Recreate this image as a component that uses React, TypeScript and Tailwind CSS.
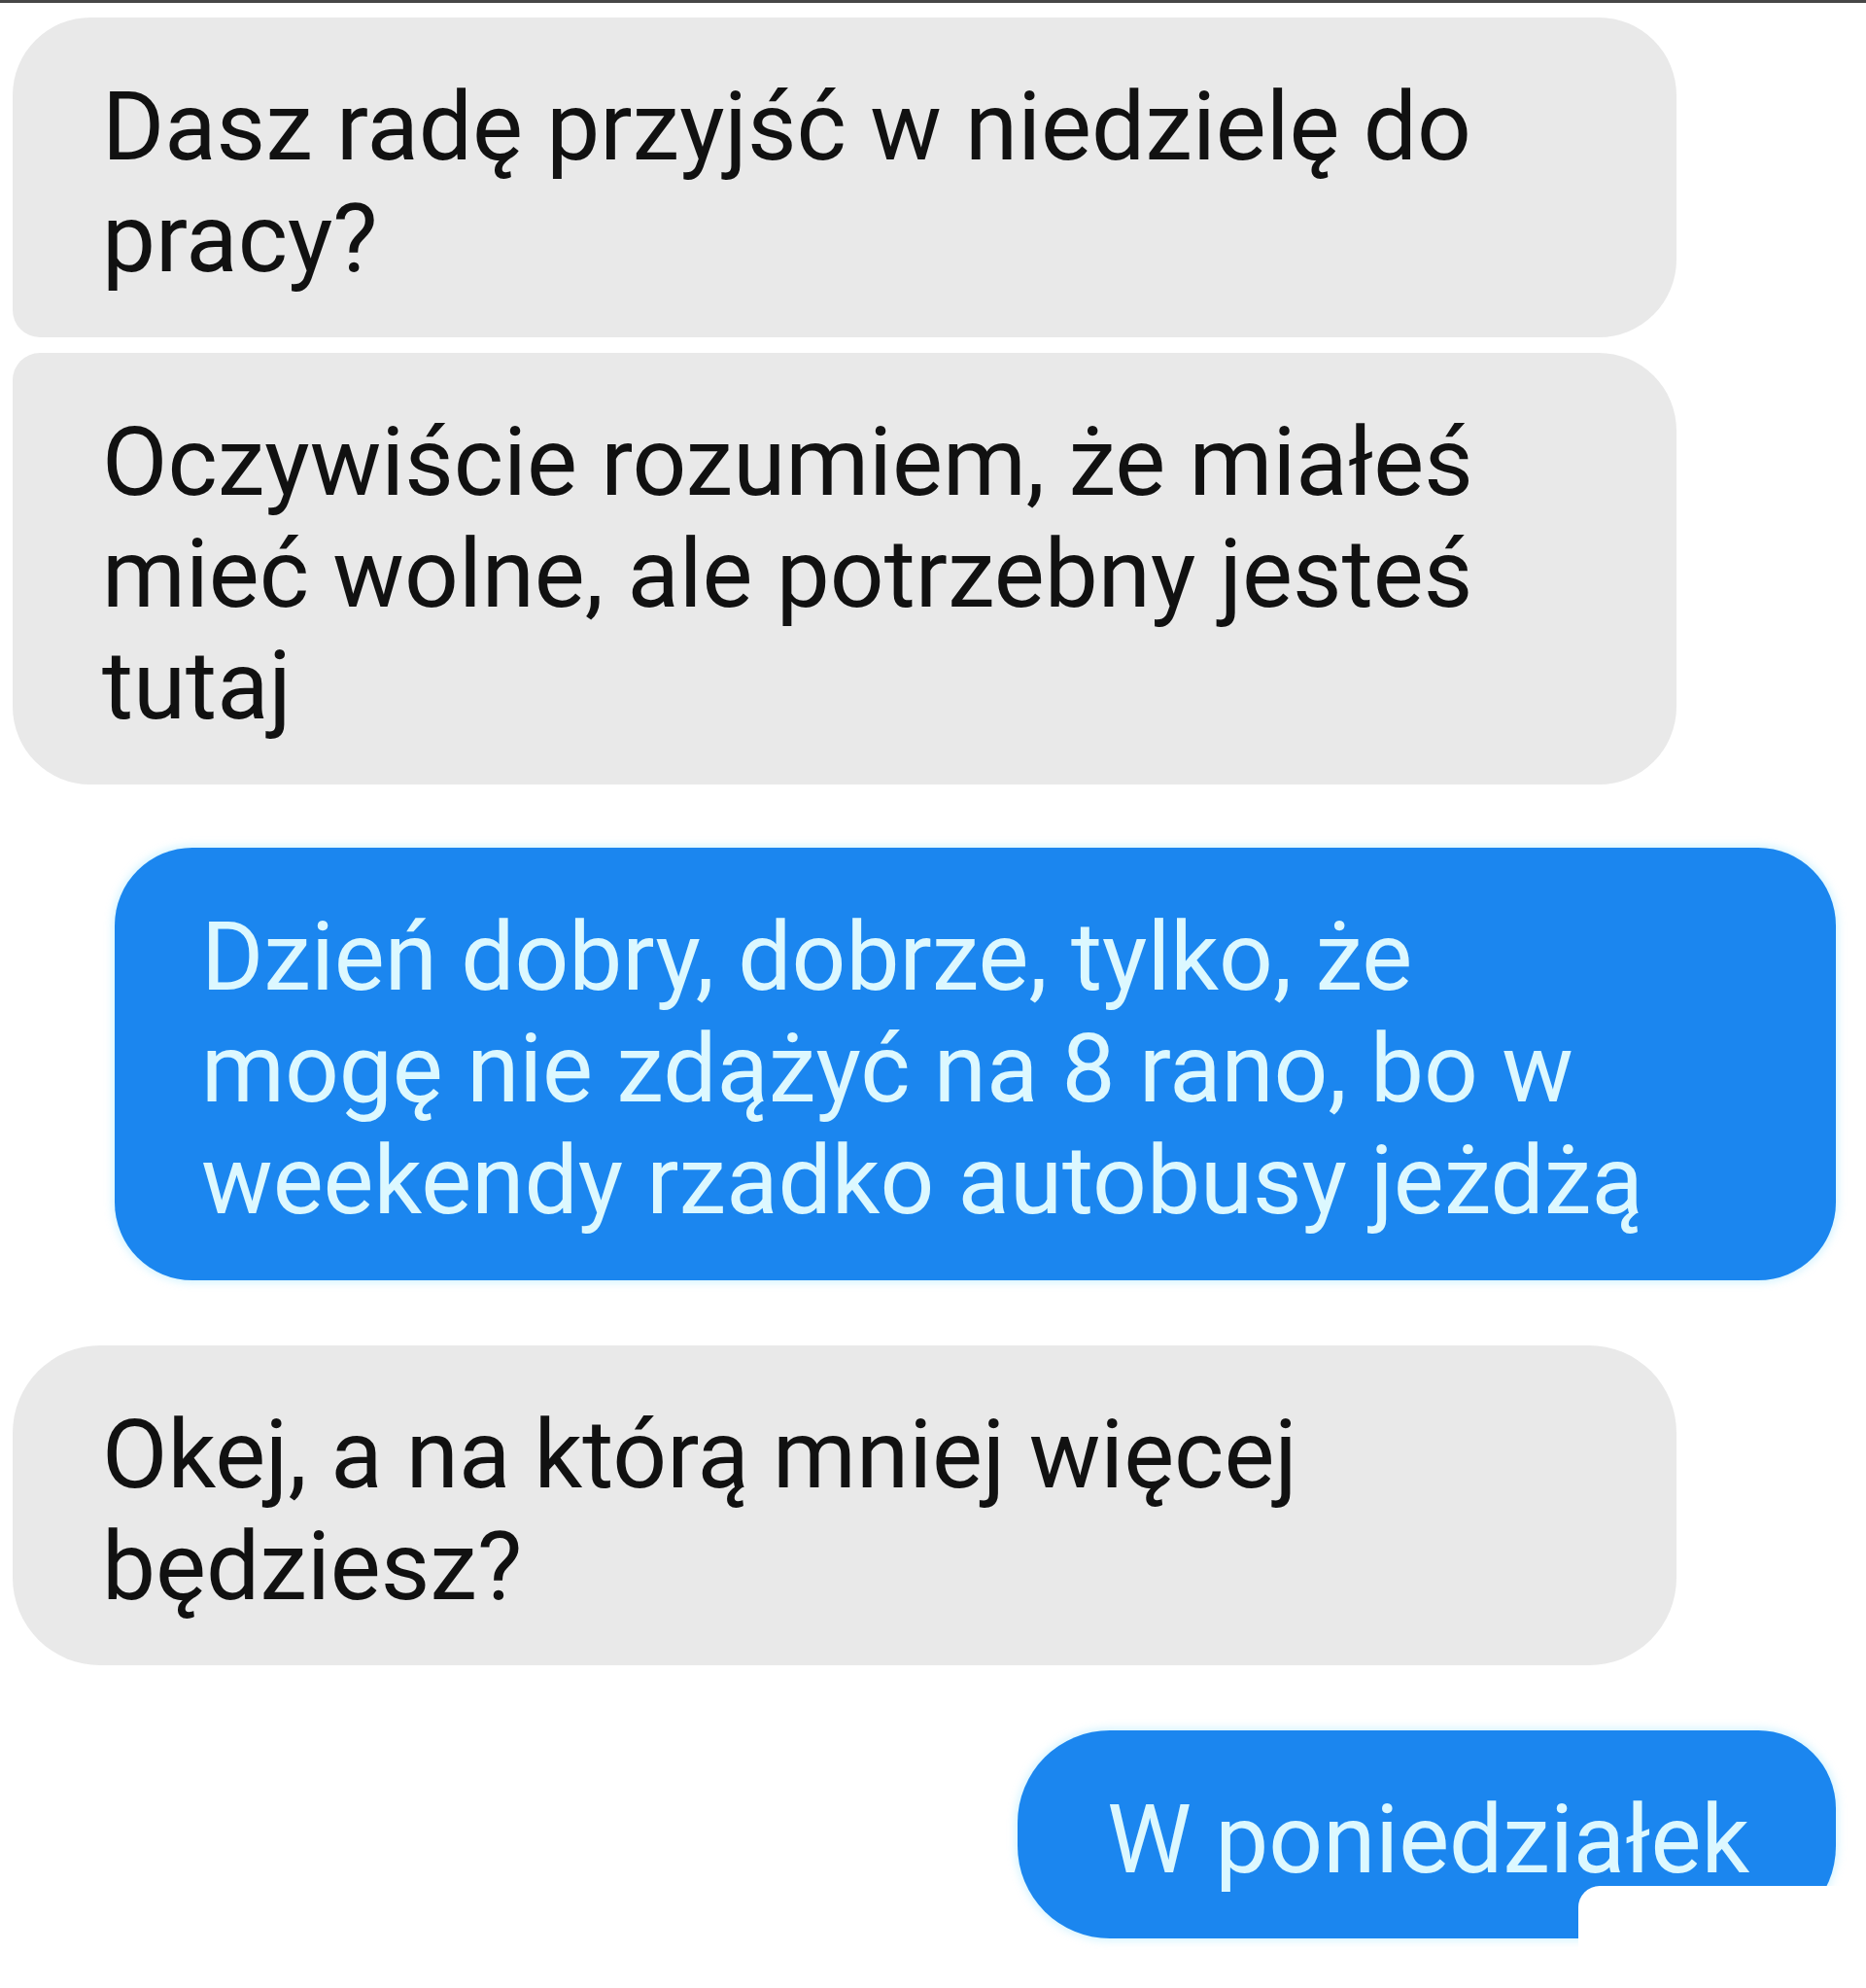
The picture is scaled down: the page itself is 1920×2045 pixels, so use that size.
const received = [
  { lines: ["Dasz radę przyjść w niedzielę do", "pracy?"], corners: "rounded-[80px] rounded-bl-[28px]" },
  { lines: ["Oczywiście rozumiem, że miałeś", "mieć wolne, ale potrzebny jesteś", "tutaj"], corners: "rounded-[80px] rounded-tl-[28px]" },
];

function Lines({ lines }: { lines: string[] }) {
  return (
    <>
      {lines.map((l, i) => (
        <span key={i} className="block whitespace-nowrap">
          {l}
        </span>
      ))}
    </>
  );
}

function Gray({ lines, corners }: { lines: string[]; corners: string }) {
  return (
    <div className={`ml-[13px] w-[1712px] bg-[#e9e9e9] pl-[92px] pt-[55px] pb-[44px] text-[#111111] ${corners}`}>
      <Lines lines={lines} />
    </div>
  );
}

export default function App() {
  return (
    <div
      className="min-h-screen w-full bg-white text-[98px] leading-[115px]"
      style={{ fontFamily: "Roboto, 'Noto Sans', sans-serif" }}
    >
      <div className="h-[3px] bg-[#474747]" />
      <div className="flex flex-col pt-[15px] pb-[50px]">
        <Gray {...received[0]} />
        <div className="mt-[16px]">
          <Gray {...received[1]} />
        </div>

        <div className="mt-[65px] ml-[118px] w-[1771px] rounded-[80px] bg-[#1b86ef] pl-[89px] pt-[55px] pb-[45px] text-[#dcf8ff] shadow-[0_0_8px_2px_rgba(190,238,255,0.7)]">
          <Lines lines={["Dzień dobry, dobrze, tylko, że", "mogę nie zdążyć na 8 rano, bo w", "weekendy rzadko autobusy jeżdżą"]} />
        </div>

        <div className="mt-[67px]">
          <Gray lines={["Okej, a na którą mniej więcej", "będziesz?"]} corners="rounded-[90px]" />
        </div>

        <div className="relative mt-[67px] mr-[31px] w-[842px] self-end">
          <div className="rounded-[95px] rounded-tr-[80px] bg-[#1b86ef] pl-[92px] pt-[55px] pb-[44px] text-[#dcf8ff] shadow-[0_0_8px_2px_rgba(190,238,255,0.7)]">
            <span className="block whitespace-nowrap">W poniedziałek</span>
          </div>
          {/* torn-off corner */}
          <div className="absolute left-[577px] top-[160px] -right-[12px] -bottom-[12px] rounded-tl-[22px] bg-white" />
        </div>
      </div>
    </div>
  );
}
